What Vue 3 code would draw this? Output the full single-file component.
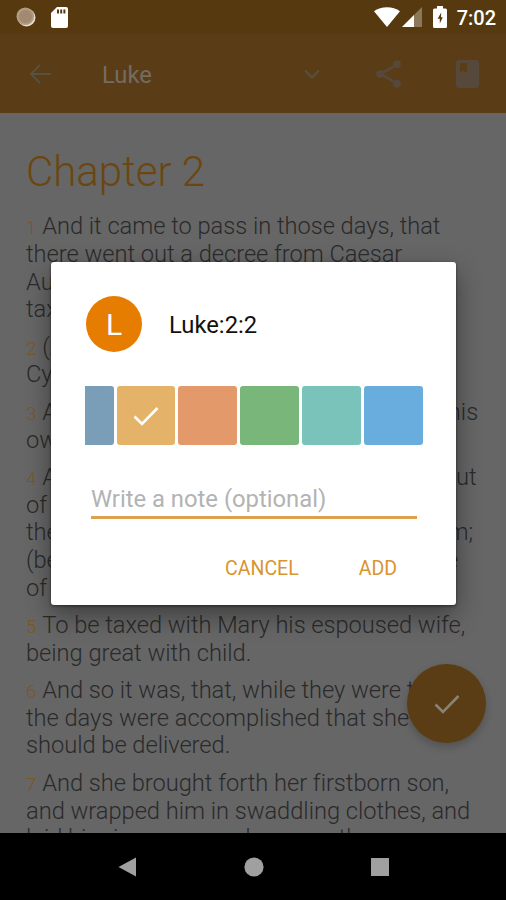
<script setup>
import { ref } from "vue";

const note = ref("");
const selected = ref("amber");

const colors = ["steel", "amber", "coral", "green", "teal", "blue"];

const verses = [
  {
    id: 1,
    lines: [
      "And it came to pass in those days, that",
      "there went out a decree from Caesar",
      "Augustus that all the world should be",
      "taxed.",
    ],
  },
  {
    id: 2,
    lines: ["(And this taxing was first made when", "Cyrenius was governor of Syria.)"],
  },
  {
    id: 3,
    lines: ["And all went to be taxed, every one into his", "own city."],
  },
  {
    id: 4,
    lines: [
      "And Joseph also went up from Galilee, out",
      "of the city of Nazareth, into Judaea, unto",
      "the city of David, which is called Bethlehem;",
      "(because he was of the house and lineage",
      "of David:)",
    ],
  },
  {
    id: 5,
    lines: ["To be taxed with Mary his espoused wife,", "being great with child."],
  },
  {
    id: 6,
    lines: [
      "And so it was, that, while they were there,",
      "the days were accomplished that she",
      "should be delivered.",
    ],
  },
  {
    id: 7,
    lines: [
      "And she brought forth her firstborn son,",
      "and wrapped him in swaddling clothes, and",
      "laid him in a manger; because there was",
    ],
  },
];
</script>

<template>
  <div class="screen">
    <div class="status-bar">
      <svg class="status-sync" viewBox="0 0 20 20">
        <circle cx="10.5" cy="10.5" r="9" fill="#e6ddd0" />
        <circle cx="9.3" cy="9.3" r="8.8" fill="#b09a80" />
        <circle cx="9.5" cy="9.5" r="6.5" fill="#a18a70" />
      </svg>
      <svg class="status-sd" viewBox="0 0 17 21">
        <path d="M6 0h9a2 2 0 0 1 2 2v17a2 2 0 0 1-2 2H2a2 2 0 0 1-2-2V6z" fill="#fff" />
        <path d="M6 2.5h2v4H6zM9.2 2.5h2v4h-2zM12.4 2.5h2v4h-2z" fill="#573910" />
      </svg>
      <span class="spacer"></span>
      <svg class="status-wifi" viewBox="0 0 26 20">
        <path d="M13 20 0 4.2C7 -1.2 19 -1.2 26 4.2z" fill="#fff" />
      </svg>
      <svg class="status-signal" viewBox="0 0 20 20">
        <path d="M20 0v20H0z" fill="#8d7759" />
        <path d="M12 8v12H0z" fill="#fff" />
      </svg>
      <svg class="status-battery" viewBox="0 0 14 22">
        <path d="M4 0h6v2.5h2.5A1.5 1.5 0 0 1 14 4v16.5a1.5 1.5 0 0 1-1.5 1.5h-11A1.5 1.5 0 0 1 0 20.5V4a1.5 1.5 0 0 1 1.5-1.5H4z" fill="#fff" />
        <path d="M8.2 6.5 4.6 12.8h2.2v4.7L9.8 11.2H8z" fill="#573910" />
      </svg>
      <span class="clock">7:02</span>
    </div>

    <header class="app-bar">
      <svg class="icon-back" viewBox="0 0 22 20">
        <path d="M22 10H2M11 1 2 10l9 9" />
      </svg>
      <h1>Luke</h1>
      <svg class="icon-down" viewBox="0 0 16 10">
        <path d="M1 1.5 8 8.5l7-7" />
      </svg>
      <svg class="icon-share" viewBox="0 0 26 28">
        <path d="M21 4.5 4.5 14 21 23.5" />
        <circle cx="21" cy="4.3" r="4" />
        <circle cx="4.3" cy="14" r="4" />
        <circle cx="21" cy="23.7" r="4" />
      </svg>
      <svg class="icon-book" viewBox="0 0 23 28">
        <path fill-rule="evenodd" d="M3 0h17a3 3 0 0 1 3 3v22a3 3 0 0 1-3 3H3a3 3 0 0 1-3-3V3a3 3 0 0 1 3-3zM4 3v9.5l3.5-1.8 3.5 1.8V3z" />
      </svg>
    </header>

    <main class="reader">
      <h2>Chapter 2</h2>
      <p v-for="verse in verses" :key="verse.id" class="verse">
        <span v-for="(line, i) in verse.lines" :key="i" class="line">
          <span v-if="i === 0" class="num">{{ verse.id }}</span>{{ line }}
        </span>
      </p>
    </main>

    <nav class="nav-bar">
      <svg viewBox="0 0 20 20"><path d="M18 .5v19L.5 10z" /></svg>
      <svg viewBox="0 0 20 20"><circle cx="10" cy="10" r="9.6" /></svg>
      <svg viewBox="0 0 20 20"><path d="M1 1h18v18H1z" /></svg>
    </nav>

    <button class="fab">
      <svg class="check" viewBox="0 0 26 20"><path d="M1.5 10.5 9 18 24.5 2" /></svg>
    </button>

    <div class="dialog">
      <div class="dialog-head">
        <span class="avatar">L</span>
        <span class="dialog-title">Luke:2:2</span>
      </div>
      <div class="swatches">
        <button
          v-for="color in colors"
          :key="color"
          class="swatch"
          :class="color"
          @click="selected = color"
        >
          <svg v-if="selected === color" class="check" viewBox="0 0 26 20">
            <path d="M1.5 10.5 9 18 24.5 2" />
          </svg>
        </button>
      </div>
      <input v-model="note" class="note" placeholder="Write a note (optional)" />
      <div class="actions">
        <button>CANCEL</button>
        <button>ADD</button>
      </div>
    </div>
  </div>
</template>

<style>
body {
  margin: 0;
  background: #666;
}
</style>

<style scoped>
.screen {
  position: relative;
  display: flex;
  flex-direction: column;
  width: 506px;
  height: 900px;
  overflow: hidden;
  background: #666;
  font-family: Roboto, "Liberation Sans", sans-serif;
}

button {
  border: 0;
  padding: 0;
  background: none;
  font: inherit;
}

svg {
  display: block;
  flex: none;
}

.status-bar {
  display: flex;
  flex: none;
  align-items: center;
  height: 34px;
  padding: 0 10px 0 16px;
  box-sizing: border-box;
  background: #57390f;
}

.status-sync {
  width: 20px;
  height: 20px;
}

.status-sd {
  width: 17px;
  height: 21px;
  margin-left: 15px;
}

.spacer {
  flex: 1;
}

.status-wifi {
  width: 26px;
  height: 20px;
}

.status-signal {
  width: 20px;
  height: 20px;
  margin-left: 2px;
}

.status-battery {
  width: 14px;
  height: 22px;
  margin: 0 10px 0 11px;
}

.clock {
  color: #fff;
  font-size: 20px;
  font-weight: 500;
  line-height: 34px;
  margin-top: 2px;
}

.app-bar {
  display: flex;
  flex: none;
  align-items: center;
  height: 79px;
  padding: 0 27px 0 29px;
  box-sizing: border-box;
  background: #5a3d16;
}

.app-bar svg {
  fill: none;
  stroke: #57513f;
  stroke-width: 2;
}

.app-bar .icon-back {
  width: 22px;
  height: 20px;
}

.app-bar h1 {
  flex: 1;
  margin: 2px 0 0 51px;
  color: #736c63;
  font-size: 23.8px;
  font-weight: 400;
}

.app-bar .icon-down {
  width: 16px;
  height: 10px;
}

.app-bar .icon-share {
  width: 26px;
  height: 28px;
  margin: 0 54px 0 56px;
  fill: #56483a;
  stroke: none;
}

.app-bar .icon-share path {
  fill: none;
  stroke: #56483a;
  stroke-width: 2.6;
}

.app-bar .icon-book {
  width: 23px;
  height: 28px;
  fill: #56483a;
  stroke: none;
}

.reader {
  flex: 1;
  min-height: 0;
  overflow: hidden;
  padding: 33px 0 0 26px;
}

.reader h2 {
  margin: 0 0 15.4px;
  color: #6b4611;
  font-size: 42px;
  font-weight: 300;
  line-height: 52px;
}

.verse {
  margin: 0 0 10px;
  color: #2a2a2a;
  font-size: 23.7px;
  font-weight: 300;
  line-height: 27.6px;
  letter-spacing: -0.04px;
}

.line {
  display: block;
  white-space: nowrap;
}

.num {
  margin-right: 6px;
  color: #7c5623;
  font-size: 18.5px;
  line-height: 1;
}

.nav-bar {
  display: flex;
  flex: none;
  align-items: center;
  justify-content: space-between;
  height: 67px;
  padding: 0 116px 0 118px;
  box-sizing: border-box;
  background: #000;
}

.nav-bar svg {
  width: 20px;
  height: 20px;
  fill: #a0a0a0;
}

.check {
  width: 26px;
  height: 20px;
  fill: none;
  stroke: #fff;
  stroke-width: 2.6;
}

/* floats over the chapter text */
.fab {
  position: absolute;
  top: 664px;
  left: 407px;
  display: grid;
  place-items: center;
  width: 79px;
  height: 79px;
  border-radius: 50%;
  background: #5a3d14;
  box-shadow: 0 4px 8px rgba(0, 0, 0, 0.2);
}

.fab .check {
  stroke: #8a8276;
}

.dialog {
  position: absolute;
  top: 262px;
  left: 51px;
  width: 405px;
  height: 343px;
  padding: 34px 34px 0;
  box-sizing: border-box;
  border-radius: 3px;
  background: #fff;
  box-shadow: 0 10px 26px rgba(0, 0, 0, 0.4), 0 1px 3px rgba(0, 0, 0, 0.5);
}

.dialog-head {
  display: flex;
  align-items: center;
  gap: 27px;
  height: 56px;
  padding-left: 1px;
}

.avatar {
  width: 56px;
  height: 56px;
  border-radius: 50%;
  background: #e67c00;
  color: #fff;
  font-size: 30px;
  line-height: 57px;
  text-align: center;
}

.dialog-title {
  margin-top: 2px;
  color: #111;
  font-size: 23.8px;
}

/* the row is scrolled to its end, so the first swatch is cut off */
.swatches {
  display: flex;
  justify-content: flex-end;
  gap: 3px;
  width: 337.6px;
  height: 59px;
  margin-top: 34px;
  overflow: hidden;
}

.swatch {
  display: grid;
  flex: none;
  place-items: center;
  width: 58.8px;
  height: 59px;
  border-radius: 3px;
}

.steel {
  background: #7a9db8;
}

.amber {
  background: #e4b269;
}

.coral {
  background: #e4996b;
}

.green {
  background: #79b679;
}

.teal {
  background: #79c3bb;
}

.blue {
  background: #69addf;
}

.note {
  display: block;
  width: 326px;
  height: 48px;
  margin: 26px 0 0 6px;
  padding: 10px 0 0;
  box-sizing: border-box;
  border: 0;
  border-bottom: 3px solid #dda04c;
  outline: 0;
  background: none;
  color: #222;
  font-family: inherit;
  font-size: 23.8px;
}

.note::placeholder {
  color: #b3b3b3;
  opacity: 1;
}

.actions {
  display: flex;
  justify-content: flex-end;
  gap: 60px;
  margin: 38px 25px 0 0;
}

.actions button {
  color: #d9952f;
  font-size: 19.5px;
  line-height: 24px;
}
</style>
